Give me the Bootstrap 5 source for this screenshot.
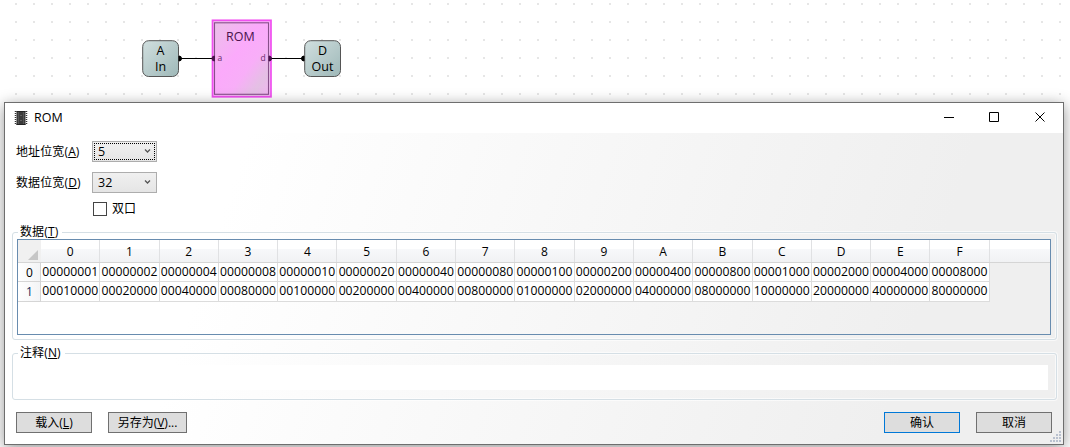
<!DOCTYPE html>
<html lang="zh-CN">
<head>
<meta charset="utf-8">
<meta name="viewport" content="width=device-width, initial-scale=1">
<title>ROM</title>
<link href="https://cdn.jsdelivr.net/npm/bootstrap@5.3.0/dist/css/bootstrap.min.css" rel="stylesheet">
<style>
body{font:12px/16px "Open Sans","Noto Sans CJK SC",sans-serif;color:#000;width:1070px;height:447px;overflow:hidden;background:#fff}
.schematic{height:102px}
.schematic svg,.dialog svg{display:block}
.schematic text{font-family:"Open Sans",sans-serif}
.dialog{width:1060px;height:343px;margin-left:4px;border:1px solid #6e6e6e;box-shadow:0 3px 14px rgba(0,0,0,.42);position:relative;background:#fff}
.titlebar{height:30px;background:#fff;padding-left:9px;padding-right:17px}
.titlebar .name{font-size:12.5px;margin-left:6px}
.client{height:311px;padding-top:8px;background:linear-gradient(108deg,#fff 21%,#efefef 84%)}
.row-line{height:21px;margin-left:11px}
.lbl{width:76px;letter-spacing:.12px}
.combo{width:65px;height:21px;border:1px solid #adadad;background:linear-gradient(#f0f0f0,#e5e5e5);padding:0 5px 0 5px;position:relative;font-size:12.5px}
.combo.focused::after{content:"";position:absolute;inset:1px;border:1px dotted #000}
.tick{width:14px;height:14px;border:1px solid #444;background:#fff}
.group{border:1px solid #d5dfe5;border-radius:3px;margin-left:7px;width:1045px;position:relative;box-shadow:inset 0 0 0 1px rgba(255,255,255,.6),0 0 0 1px rgba(255,255,255,.6)}
.group>.caption{position:absolute;left:5px;top:-9px;padding:0 4px 0 2px;background:#fff;line-height:15px;height:15px;letter-spacing:.12px}
.grid-box{margin:6px 0 0 4px;width:1034px;height:96px;border:1px solid #688caf}
.head{height:23px;background:linear-gradient(#fff 0 42%,#f7f8fa 42%,#f1f2f4);border-bottom:1px solid #d5d5d5}
.corner{width:23px;height:22px;background:#f0f0f0}
.cells{display:grid;grid-template-columns:repeat(16,59.3px);width:949px}
.cells>div{text-align:center;border-right:1px solid #dcdcdc;white-space:nowrap}
.head .cells>div{line-height:24px;height:22px;border-color:#e0e1e3}
.data{height:19px}
.data.second{height:20px}
.data>.num{width:23px;text-align:center;background:linear-gradient(90deg,#fff,#f3f4f6);border-right:1px solid #d5d5d5;border-bottom:1px solid #d5d5d5;line-height:19px;padding-left:1px}
.data .cells>div{background:#fff;border-bottom:1px solid #dcdcdc;line-height:18px;font-size:12.2px;letter-spacing:.03px}
.note{height:25px;width:1034px;background:#fff;margin:11px 0 0 1px}
.push{width:76px;height:21px;padding:0;border:1px solid #707070;border-radius:0;background:#ddd;font-size:12px;line-height:19px;color:#000}
.push.default{border-color:#0078d7}
.grip{position:absolute;right:2px;bottom:2px}
</style>
</head>
<body>
<div class="schematic">
<svg width="1070" height="102" viewBox="0 0 1070 102">
<defs>
<pattern id="dots" x="15" y="3" width="18" height="18" patternUnits="userSpaceOnUse"><rect width="2" height="2" fill="#e6e6e6"/></pattern>
<linearGradient id="pin" x2="1" y2="1"><stop stop-color="#d1dfdf"/><stop offset="1" stop-color="#9eb8b8"/></linearGradient>
<linearGradient id="rom" x2="1" y2="1"><stop stop-color="#e9c2e6"/><stop offset=".42" stop-color="#fbaafb"/><stop offset=".62" stop-color="#f8aef8"/><stop offset=".82" stop-color="#e4c0e4"/><stop offset="1" stop-color="#f3b3f3"/></linearGradient>
</defs>
<rect width="1070" height="102" fill="url(#dots)"/>
<rect x="142.700" y="40.700" width="35.800" height="35.800" rx="6" fill="url(#pin)" stroke="#555"/>
<rect x="304.700" y="40.700" width="35.800" height="35.800" rx="6" fill="url(#pin)" stroke="#555"/>
<rect x="212.500" y="20.300" width="58.500" height="76.500" fill="url(#rom)" stroke="#f04ff0" stroke-width="1.700"/>
<rect x="214.500" y="22.800" width="54" height="71.500" fill="none" stroke="#87508a" stroke-width="1.100"/>
<path d="M179 58.500H213M271 58.500H304" stroke="#000" stroke-width="1.200"/>
<path d="M179 56a2.500 2.500 0 0 1 0 5ZM304 56a2.500 2.500 0 0 0 0 5Z" stroke="#000"/>
<path d="M214.500 56a2.500 2.500 0 0 0 0 5ZM269 56a2.500 2.500 0 0 1 0 5Z" fill="#4a134c" stroke="#4a134c"/>
<g text-anchor="middle" font-size="12.500">
<text x="160.500" y="55">A</text><text x="160.500" y="71">In</text>
<text x="322.500" y="55">D</text><text x="322.500" y="71">Out</text>
<text x="240.300" y="41" fill="#4a134c">ROM</text>
</g>
<g font-size="8.500" fill="#6b2a6d"><text x="217.500" y="61">a</text><text x="260.500" y="61">d</text></g>
</svg>
</div>
<main class="dialog">
<header class="titlebar d-flex align-items-center">
<svg width="14" height="16" viewBox="0 0 14 16"><path d="M1.500 1V15M12.500 1V15" stroke="#333" stroke-width="1.500" stroke-dasharray="1 1"/><rect x="2.500" y="1" width="9" height="14" fill="#3a3a3a"/><path d="M4.500 2V14M9.500 2V14" stroke="#555"/><path d="M2.500 1.500h9M2.500 14.500h9" stroke="#222"/><path d="M6.500 5h1v1h-1zM6.500 10h1v1h-1z" fill="#888"/></svg>
<span class="name">ROM</span>
<div class="ms-auto d-flex">
<svg width="102" height="14" viewBox="0 0 102 14" fill="none" stroke="#000"><path d="M0 6.500H10"/><path d="M45.500 1.500h9v9h-9z"/><path d="M91.500 1.500l9 9m0-9l-9 9"/></svg>
</div>
</header>
<div class="client">
<div class="row-line d-flex align-items-center"><div class="lbl">地址位宽(<u>A</u>)</div><div class="combo focused d-flex align-items-center justify-content-between"><span>5</span><svg width="7" height="5"><path d="M1 0.500L3.500 3 6 .5" fill="none" stroke="#555" stroke-width="1.300"/></svg></div></div>
<div class="row-line d-flex align-items-center" style="margin-top:10px"><div class="lbl">数据位宽(<u>D</u>)</div><div class="combo d-flex align-items-center justify-content-between"><span>32</span><svg width="7" height="5"><path d="M1 0.500L3.500 3 6 .5" fill="none" stroke="#555" stroke-width="1.300"/></svg></div></div>
<div class="d-flex align-items-center" style="margin:9px 0 0 88px;height:14px"><span class="tick"></span><span style="margin-left:5px">双口</span></div>
<section class="group" style="height:108px;margin-top:16px;padding-top:.1px"><span class="caption">数据(<u>T</u>)</span>
<div class="grid-box" id="memory"></div></section>
<section class="group" style="height:47px;margin-top:13px;padding-top:.1px"><span class="caption">注释(<u>N</u>)</span><div class="note"></div></section>
<div class="d-flex" style="margin:12px 11px 0"><button class="btn push">载入(<u>L</u>)</button><button class="btn push" style="width:79px;margin-left:16px">另存为(<u>V</u>)...</button><button class="btn push default ms-auto">确认</button><button class="btn push" style="margin-left:16px">取消</button></div>
</div>
<svg class="grip" width="11" height="11" fill="#b9c1cf"><path d="M9 0h2v2H9zM6 3h2v2H6zM9 3h2v2H9zM3 6h2v2H3zM6 6h2v2H6zM9 6h2v2H9zM0 9h2v2H0zM3 9h2v2H3zM6 9h2v2H6zM9 9h2v2H9z"/></svg>
</main>
<script src="https://cdn.jsdelivr.net/npm/bootstrap@5.3.0/dist/js/bootstrap.bundle.min.js"></script>
<script>
const cells = values => '<div class="cells">' + values.map(v => `<div>${v}</div>`).join('') + '</div>';
const columns = [...Array(16).keys()];
const word = n => (2 ** n).toString(16).padStart(8, '0');
document.getElementById('memory').innerHTML =
  '<div class="head d-flex"><div class="corner"><svg width="23" height="22"><path d="M20 10V20H10Z" fill="#c6c6c6"/></svg></div>' + cells(columns.map(n => n.toString(16).toUpperCase())) + '</div>' +
  '<div class="data d-flex"><div class="num">0</div>' + cells(columns.map(word)) + '</div>' +
  '<div class="data second d-flex"><div class="num" style="color:#102a5a">1</div>' + cells(columns.map(n => word(n + 16))) + '</div>';
</script>
</body>
</html>
